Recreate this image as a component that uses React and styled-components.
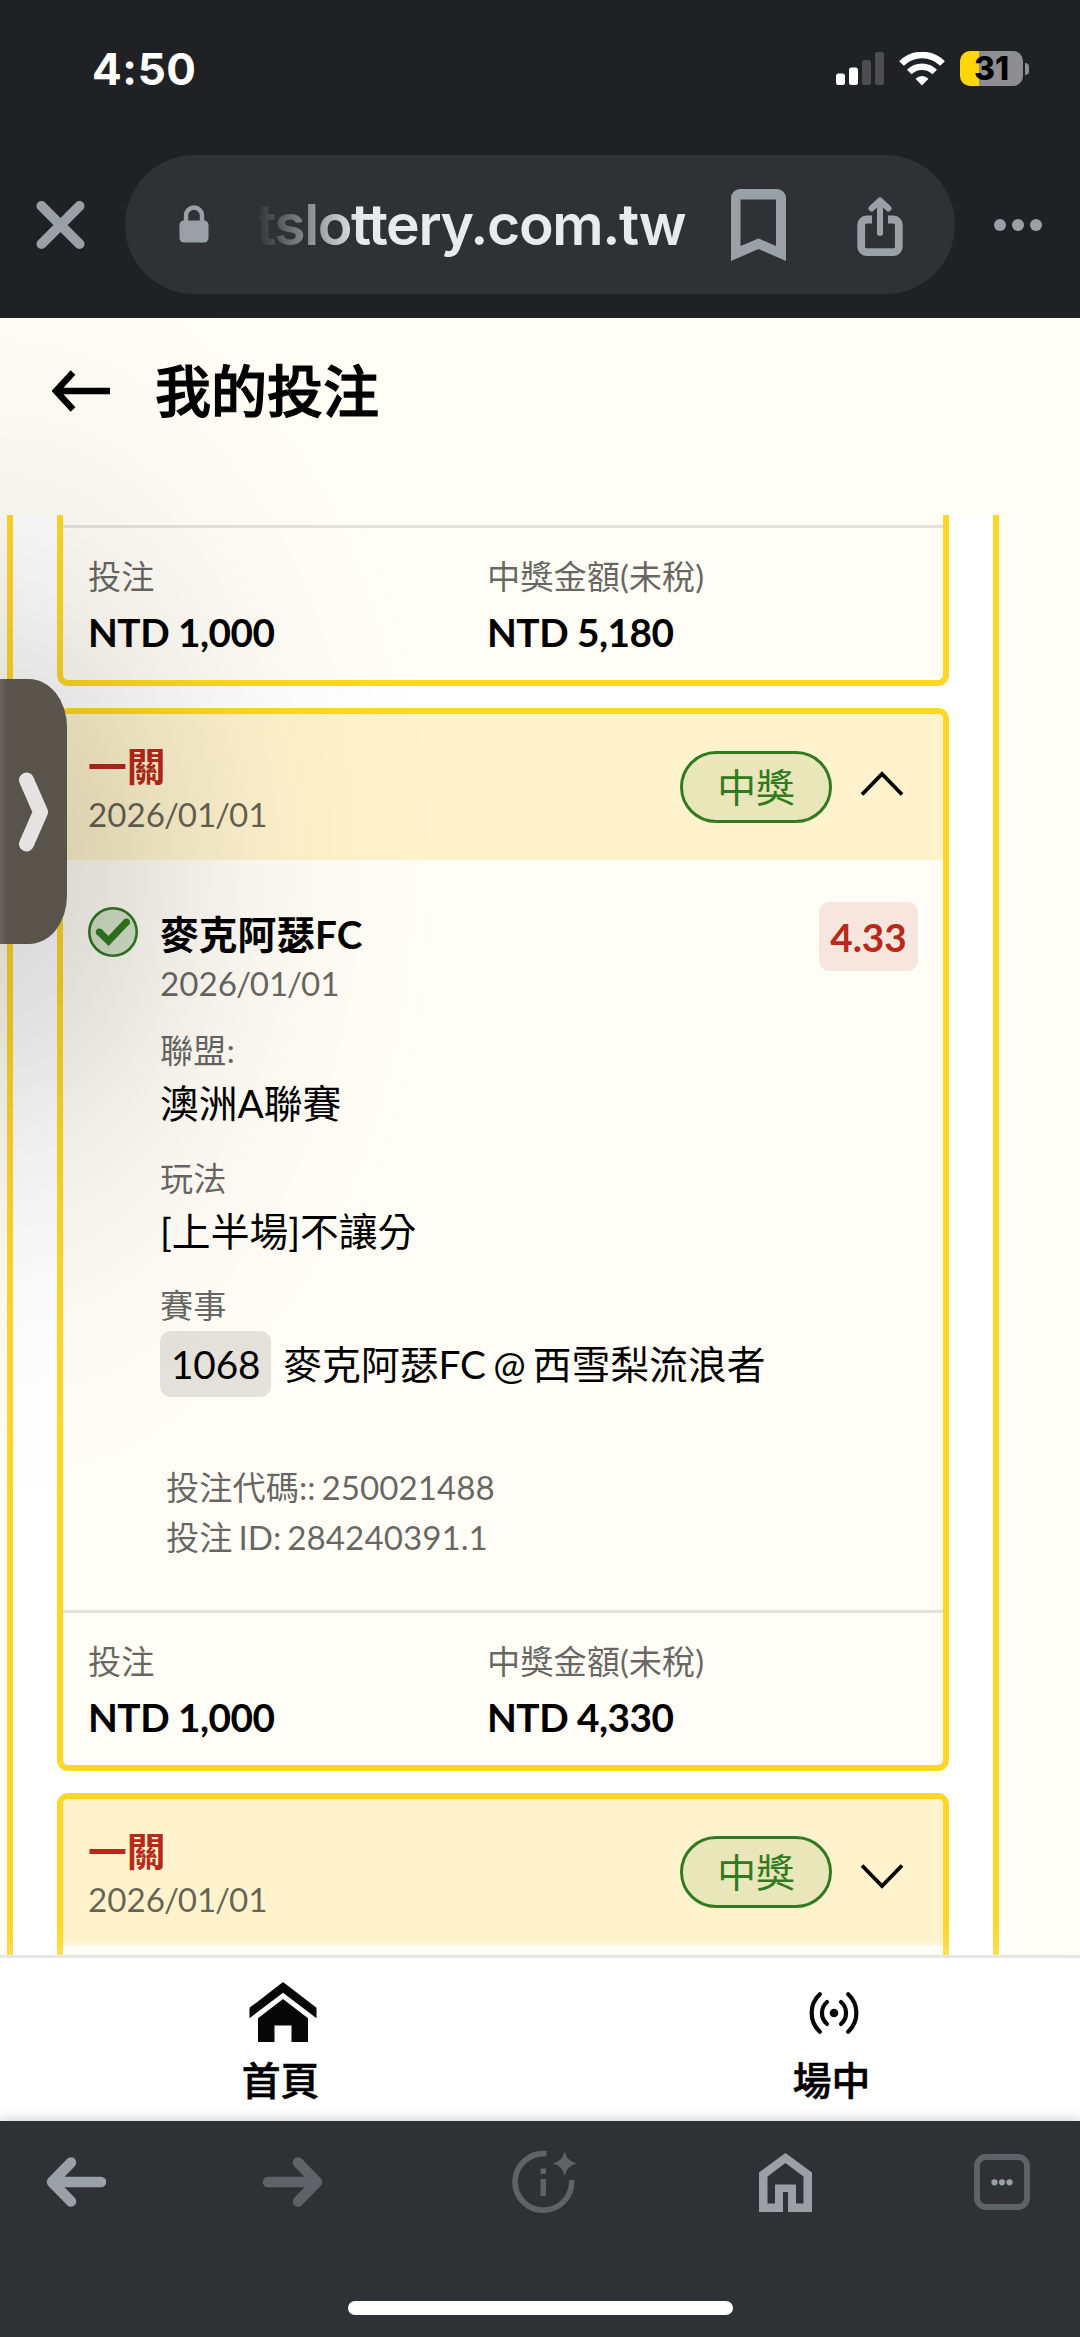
import styled, { createGlobalStyle } from "styled-components";

const GlobalStyle = createGlobalStyle`
  * {
    box-sizing: border-box;
  }

  body {
    margin: 0;
    background: #303134;
    font-family: Lato, "Noto Sans CJK TC", sans-serif;
    color: #000;
  }

  svg {
    display: block;
    flex: none;
  }
`;

const Phone = styled.div`
  display: flex;
  flex-direction: column;
  width: 1080px;
  height: 2337px;
  overflow: hidden;
`;

const Top = styled.header`
  height: 318px;
  background: #202124;
  font-family: Inter, sans-serif;
`;

const StatusBar = styled.div`
  display: flex;
  align-items: center;
  height: 155px;
  padding: 0 51px 18px 92px;
`;

const Clock = styled.div`
  flex: 1;
  color: #fff;
  font-size: 44px;
  font-weight: 700;
  letter-spacing: 0.6px;
`;

const Battery = styled.div`
  display: flex;
  align-items: center;
  justify-content: center;
  width: 63px;
  height: 35px;
  margin-left: 15px;
  border-radius: 10px;
  background: linear-gradient(to right, #ffd60a 19.5px, #8e8e90 19.5px);
  color: #000;
  font-size: 32px;
  font-weight: 800;
`;

const BatteryTip = styled.div`
  width: 4px;
  height: 12px;
  margin-left: 2px;
  border-radius: 0 5px 5px 0;
  background: #8e8e90;
`;

const AddressRow = styled.div`
  display: flex;
  align-items: center;
  height: 139px;
  padding: 0 37px 0 36px;
`;

const AddressBar = styled.div`
  display: flex;
  align-items: center;
  width: 831px;
  height: 139px;
  margin: 0 39px 0 40px;
  padding: 0 52px 0 54px;
  border-radius: 70px;
  background: #303134;
`;

const Url = styled.div`
  width: 431px;
  margin: 0 44px 0 47px;
  padding-top: 1px;
  color: #e8eaed;
  font-size: 57px;
  font-weight: 600;
  line-height: 80px;
  letter-spacing: -1.4px;
  white-space: nowrap;
  mask-image: linear-gradient(to right, transparent, #000 105px);
`;

const Page = styled.main`
  position: relative;
  display: flex;
  flex-direction: column;
  height: 1803px;
  background: #fffdf5;
`;

const PageHeader = styled.div`
  display: flex;
  align-items: center;
  height: 197px;
  padding: 0 0 52px 52px;
`;

const PageTitle = styled.h1`
  margin: 0 0 0 43px;
  font-size: 56px;
  font-weight: 500;
  line-height: 60px;
  -webkit-text-stroke: 1.2px #000;
`;

const BetList = styled.section`
  display: flex;
  flex-direction: column;
  gap: 22px;
  width: 992px;
  height: 1440px;
  margin-left: 7px;
  padding: 0 44px;
  overflow: hidden;
  border: solid #ffd72a;
  border-width: 0 6px;
  background: #fff;
`;

const Card = styled.article`
  flex: none;
  overflow: hidden;
  border: 6px solid #ffd72a;
  border-top-width: ${({ $cut }) => ($cut ? 0 : "6px")};
  border-radius: ${({ $cut }) => ($cut ? "0 0 11px 11px" : "11px")};
  background: #fffdf5;
`;

const CardHeader = styled.div`
  display: flex;
  align-items: center;
  height: 146px;
  padding: 0 39px 0 25px;
  background: #fff3cd;
`;

const CardHeading = styled.div`
  flex: 1;
  padding-top: 6px;
`;

const Legs = styled.div`
  color: #b8291a;
  font-size: 38.77px;
  font-weight: 700;
  line-height: 48px;
`;

const Muted = styled.div`
  color: rgba(0, 0, 0, 0.6);
  font-size: 33.23px;
  line-height: ${({ $line }) => $line || 48}px;
  word-spacing: -2.5px;
`;

const Slash = styled.span`
  margin: 0 -1.2px;
`;

const Badge = styled.div`
  display: flex;
  align-items: center;
  justify-content: center;
  width: 152px;
  height: 72px;
  margin-right: 28px;
  border: 3px solid #317a20;
  border-radius: 36px;
  background: #e9e6b9;
  color: #317a20;
  font-size: 38.77px;
  line-height: 1;
`;

const CardBody = styled.div`
  display: flex;
  align-items: flex-start;
  height: ${({ $height }) => $height}px;
  padding: 0 25px;
`;

const Selection = styled.div`
  flex: 1;
  padding: 50px 0 0 22px;
`;

const Team = styled.div`
  font-size: 38.77px;
  font-weight: 700;
  line-height: 48px;
`;

const Detail = styled.div`
  margin-top: ${({ $first }) => ($first ? 18 : 20.5)}px;
`;

const Value = styled.div`
  font-size: 38.77px;
  line-height: 59px;
`;

const Match = styled.div`
  display: flex;
  align-items: center;
  gap: 12px;
  padding-top: 2px;
  font-size: 38.77px;
  line-height: 64px;
  word-spacing: -2.7px;
`;

const MatchCode = styled.span`
  height: 66px;
  padding: 0 11px;
  border-radius: 11px;
  background: #e5e2dc;
  line-height: 66px;
  letter-spacing: -0.15px;
`;

const Codes = styled.div`
  padding: 65px 0 0 6px;
`;

const Odds = styled.div`
  width: 99px;
  height: 69px;
  margin-top: 42px;
  border-radius: 11px;
  background: #f7e6de;
  color: #b8291a;
  font-size: 38.77px;
  font-weight: 700;
  line-height: 70px;
  text-align: center;
`;

const CheckMark = styled.div`
  padding-top: 47px;
`;

const CardFooter = styled.div`
  display: grid;
  grid-template-columns: 399px 1fr;
  height: 155px;
  padding: 24px 25px 0;
  border-top: 3px solid #e5e2db;
`;

const Amount = styled.div`
  font-size: 38.77px;
  font-weight: 700;
  line-height: 64px;
  letter-spacing: -0.5px;
`;

const SiteNav = styled.nav`
  display: flex;
  height: 166px;
  padding: 0 0 0 7px;
  border-top: 3px solid #e6e6e6;
  background: #fff;
  box-shadow: 0 0 28px rgba(255, 255, 255, 0.5);
  z-index: 1;
`;

const NavItem = styled.div`
  display: flex;
  flex: none;
  flex-direction: column;
  align-items: center;
  width: 551px;
  padding-top: 24px;
  font-size: 38.77px;
  font-weight: 500;
  line-height: 48px;
`;

const NavLabel = styled.span`
  margin: 14px 4px 0 0;
  -webkit-text-stroke: 0.6px #000;
`;

// Soft shade cast by the drawer handle over the page
const HandleShade = styled.div`
  position: absolute;
  z-index: 2;
  inset: 0 auto auto 0;
  width: 460px;
  height: 1220px;
  background: radial-gradient(
    ellipse 450px 660px at 0 550px,
    rgba(0, 0, 0, 0.15) 0%,
    rgba(0, 0, 0, 0.142) 11%,
    rgba(0, 0, 0, 0.12) 22%,
    rgba(0, 0, 0, 0.091) 33%,
    rgba(0, 0, 0, 0.06) 45%,
    rgba(0, 0, 0, 0.037) 56%,
    rgba(0, 0, 0, 0.02) 67%,
    rgba(0, 0, 0, 0.006) 83%,
    transparent 100%
  );
  pointer-events: none;
`;

const Handle = styled.div`
  position: absolute;
  z-index: 3;
  top: 361px;
  left: 0;
  display: flex;
  align-items: center;
  width: 67px;
  height: 265px;
  padding-left: 19px;
  border-radius: 0 38px 38px 0 / 0 48px 48px 0;
  background: linear-gradient(to right, #6a655e 0, #58544b 8px);
`;

const Toolbar = styled.footer`
  position: relative;
  z-index: 2;
  height: 216px;
  background: #303134;
  box-shadow: 0 0 12px rgba(0, 0, 0, 0.25);
`;

const ToolbarIcons = styled.div`
  display: grid;
  grid-template-columns: 217px 248px 248px 215px auto;
  align-items: center;
  height: 122px;
  padding-left: 46px;
`;

const HomeIndicator = styled.div`
  width: 385px;
  height: 14px;
  margin: 58px auto 0;
  border-radius: 7px;
  background: #fff;
`;

const Wifi = styled.svg`
  margin-left: 15px;
`;

const Lock = styled.svg`
  margin-top: -2px;
`;

const Share = styled.svg`
  margin: 4px 0 0 71px;
`;

const ChevronSvg = styled.svg`
  margin-top: ${({ $open }) => ($open ? -6 : 8)}px;
`;

function SignalIcon() {
  return (
    <svg width="48" height="33" viewBox="0 0 48 33">
      <rect x="0" y="21.5" width="9" height="11.5" rx="2.5" fill="#fff" />
      <rect x="13" y="15.5" width="9" height="17.5" rx="2.5" fill="#fff" />
      <rect x="26" y="8" width="9" height="25" rx="2.5" fill="#4d4d50" />
      <rect x="39" y="0" width="9" height="33" rx="2.5" fill="#4d4d50" />
    </svg>
  );
}

function WifiIcon() {
  return (
    <Wifi width="46" height="34" viewBox="0 0 46 34">
      <path d="M2.5 11.5a29 29 0 0 1 41 0" fill="none" stroke="#fff" strokeWidth="6.6" />
      <path d="M10.3 20a18 18 0 0 1 25.4 0" fill="none" stroke="#fff" strokeWidth="6.4" />
      <path d="M16.5 26.8a9.2 9.2 0 0 1 13 0L23 33.6z" fill="#fff" />
    </Wifi>
  );
}

function CloseIcon() {
  return (
    <svg width="49" height="50" viewBox="0 0 49 50">
      <path d="M5.5 6l38 38M43.5 6l-38 38" stroke="#9aa0a6" strokeWidth="10" strokeLinecap="round" />
    </svg>
  );
}

function LockIcon() {
  return (
    <Lock width="30" height="38" viewBox="0 0 30 38">
      <path d="M7 17v-6.5a8 8 0 0 1 16 0v6.5" fill="none" stroke="#9aa0a6" strokeWidth="4.4" />
      <rect x="0.5" y="15.5" width="29" height="22" rx="4.5" fill="#9aa0a6" />
    </Lock>
  );
}

function BookmarkIcon() {
  return (
    <svg width="55" height="72" viewBox="0 0 55 72">
      <path
        fillRule="evenodd"
        d="M9 0h37a9 9 0 0 1 9 9v63L27.5 60 0 72V9a9 9 0 0 1 9-9zM9.5 10.500v46.500l18-7.500 17.500 7.500V10.500z"
        fill="#9aa0a6"
      />
    </svg>
  );
}

function ShareIcon() {
  return (
    <Share width="46" height="60" viewBox="0 0 46 60">
      <g fill="none" stroke="#9aa0a6">
        <path
          d="M15 22.5H9.5A5.3 5.3 0 0 0 4.2 27.8v22a5.3 5.3 0 0 0 5.3 5.3h27a5.3 5.3 0 0 0 5.3-5.3v-22a5.3 5.3 0 0 0-5.3-5.3H31"
          strokeWidth="7.8"
        />
        <path d="M23 36V4M14.5 11.5L23 3.5l8.5 8" strokeWidth="6" strokeLinecap="round" strokeLinejoin="round" />
      </g>
    </Share>
  );
}

function MoreIcon() {
  return (
    <svg width="49" height="12" viewBox="0 0 49 12" fill="#9aa0a6">
      <circle cx="6" cy="6" r="6" />
      <circle cx="24" cy="6" r="6" />
      <circle cx="42" cy="6" r="6" />
    </svg>
  );
}

function PageBackIcon() {
  return (
    <svg width="60" height="42" viewBox="0 0 60 42">
      <path d="M58 21H4M21 2.5L4 21l17 18.5" fill="none" stroke="#000" strokeWidth="6.5" />
    </svg>
  );
}

function Chevron({ open }) {
  return (
    <ChevronSvg $open={open} width="44" height="26" viewBox="0 0 44 26">
      <path
        d={open ? "M2 23.5L22 3l20 20.5" : "M2 2.5L22 23 42 2.5"}
        fill="none"
        stroke="#000"
        strokeWidth="3.8"
      />
    </ChevronSvg>
  );
}

function CheckIcon() {
  return (
    <svg width="50" height="50" viewBox="0 0 50 50">
      <circle cx="25" cy="25" r="23.7" fill="#317a20" fillOpacity="0.2" stroke="#317a20" strokeWidth="2.6" />
      <path d="M11.5 25l9 9L38 15.5" fill="none" stroke="#317a20" strokeWidth="7" />
      <circle cx="11.3" cy="25" r="3.5" fill="#317a20" />
      <circle cx="38.5" cy="15" r="3.5" fill="#317a20" />
    </svg>
  );
}

function SiteHomeIcon() {
  return (
    <svg width="68" height="60" viewBox="0 0 68 58" preserveAspectRatio="none" fill="#070707">
      <path d="M34 0l33.5 25v10L34 10.5.5 35V25z" />
      <path d="M34 16.5L59 35v23H42.5V42h-17v16H9V35z" />
    </svg>
  );
}

function LiveIcon() {
  return (
    <svg width="54" height="60" viewBox="-2 0 54 60" fill="none" stroke="#070707" strokeLinecap="round">
      <circle cx="25" cy="31" r="4.3" fill="#070707" stroke="none" />
      <path d="M18 20a14.5 14.5 0 0 0 0 22M32 20a14.5 14.500 0 0 1 0 22" strokeWidth="4.2" />
      <path d="M10.8 12.3a25.500 25.500 0 0 0 0 37.400M39.200 12.3a25.500 25.500 0 0 1 0 37.400" strokeWidth="4.2" />
    </svg>
  );
}

function ArrowIcon({ forward }) {
  return (
    <svg width="60" height="50" viewBox="0 0 60 50">
      <path
        d="M55 25H8M25 5.5L6 25l19 19.5"
        transform={forward ? "matrix(-1 0 0 1 60 0)" : undefined}
        fill="none"
        stroke={forward ? "#5f6368" : "#9aa0a6"}
        strokeWidth="10.5"
        strokeLinecap="round"
        strokeLinejoin="round"
      />
    </svg>
  );
}

function PageInfoIcon() {
  return (
    <svg width="66" height="64" viewBox="0 0 66 64">
      <path d="M35.5 3.8A28.3 28.3 0 1 0 60.6 30" fill="none" stroke="#5f6368" strokeWidth="5.6" />
      <path d="M29.5 18.5H35V24h-5.5zM29.5 29H35v17h-5.5z" fill="#5f6368" />
      <path
        d="M53.7 1c2 7.5 4 9.7 11.8 12.5-7.8 2.8-9.8 5-11.8 12.5-2-7.5-4-9.7-11.8-12.5C49.7 10.7 51.7 8.5 53.7 1z"
        fill="#5f6368"
      />
    </svg>
  );
}

function HomeIcon() {
  return (
    <svg width="53" height="59" viewBox="0 0 53 59">
      <path
        fillRule="evenodd"
        d="M26.5 0L53 19.5V59H29V39h-5v20H0V19.5zM26.5 10L8.5 23.5V50.500H16V31.500h21v19h7.500v-27z"
        fill="#9aa0a6"
      />
    </svg>
  );
}

function TabsIcon() {
  return (
    <svg width="56" height="56" viewBox="0 0 56 56">
      <rect x="3" y="3" width="50" height="50" rx="9" fill="none" stroke="#5f6368" strokeWidth="5.8" />
      <g fill="#9aa0a6">
        <circle cx="20.5" cy="28.3" r="3.1" />
        <circle cx="28" cy="28.3" r="3.1" />
        <circle cx="35.5" cy="28.3" r="3.1" />
      </g>
    </svg>
  );
}

function BetDate({ line }) {
  return (
    <Muted $line={line}>
      2026<Slash>/</Slash>01<Slash>/</Slash>01
    </Muted>
  );
}

function BetHeader({ open }) {
  return (
    <CardHeader>
      <CardHeading>
        <Legs>一關</Legs>
        <BetDate />
      </CardHeading>
      <Badge>中獎</Badge>
      <Chevron open={open} />
    </CardHeader>
  );
}

function BetFooter({ stake, payout }) {
  return (
    <CardFooter>
      <div>
        <Muted>投注</Muted>
        <Amount>NTD {stake}</Amount>
      </div>
      <div>
        <Muted>中獎金額(未稅)</Muted>
        <Amount>NTD {payout}</Amount>
      </div>
    </CardFooter>
  );
}

function App() {
  return (
    <>
      <GlobalStyle />
      <Phone lang="zh-Hant">
        <Top>
          <StatusBar>
            <Clock>4:50</Clock>
            <SignalIcon />
            <WifiIcon />
            <Battery>31</Battery>
            <BatteryTip />
          </StatusBar>
          <AddressRow>
            <CloseIcon />
            <AddressBar>
              <LockIcon />
              <Url>tslottery.com.tw</Url>
              <BookmarkIcon />
              <ShareIcon />
            </AddressBar>
            <MoreIcon />
          </AddressRow>
        </Top>

        <Page>
          <PageHeader>
            <PageBackIcon />
            <PageTitle>我的投注</PageTitle>
          </PageHeader>
          <BetList>
            <Card $cut>
              <CardBody $height={10} />
              <BetFooter stake="1,000" payout="5,180" />
            </Card>
            <Card>
              <BetHeader open />
              <CardBody $height={750}>
                <CheckMark>
                  <CheckIcon />
                </CheckMark>
                <Selection>
                  <Team>麥克阿瑟FC</Team>
                  <BetDate line={50} />
                  <Detail $first>
                    <Muted>聯盟:</Muted>
                    <Value>澳洲A聯賽</Value>
                  </Detail>
                  <Detail>
                    <Muted>玩法</Muted>
                    <Value>[上半場]不讓分</Value>
                  </Detail>
                  <Detail>
                    <Muted>賽事</Muted>
                    <Match>
                      <MatchCode>1068</MatchCode>
                      麥克阿瑟FC @ 西雪梨流浪者
                    </Match>
                  </Detail>
                  <Codes>
                    <Muted $line={50}>投注代碼:: 250021488</Muted>
                    <Muted $line={50}>投注 ID: 284240391.1</Muted>
                  </Codes>
                </Selection>
                <Odds>4.33</Odds>
              </CardBody>
              <BetFooter stake="1,000" payout="4,330" />
            </Card>
            <Card>
              <BetHeader />
              <CardBody $height={750} />
            </Card>
          </BetList>
          <SiteNav>
            <NavItem>
              <SiteHomeIcon />
              <NavLabel>首頁</NavLabel>
            </NavItem>
            <NavItem>
              <LiveIcon />
              <NavLabel>場中</NavLabel>
            </NavItem>
          </SiteNav>
          <HandleShade />
          <Handle>
            <svg width="30" height="80" viewBox="0 0 30 80">
              <path
                d="M7.5 8L21.5 40 7.5 72"
                fill="none"
                stroke="#e5e4e2"
                strokeWidth="15"
                strokeLinecap="round"
                strokeLinejoin="round"
              />
            </svg>
          </Handle>
        </Page>

        <Toolbar>
          <ToolbarIcons>
            <ArrowIcon />
            <ArrowIcon forward />
            <PageInfoIcon />
            <HomeIcon />
            <TabsIcon />
          </ToolbarIcons>
          <HomeIndicator />
        </Toolbar>
      </Phone>
    </>
  );
}

export default App;
